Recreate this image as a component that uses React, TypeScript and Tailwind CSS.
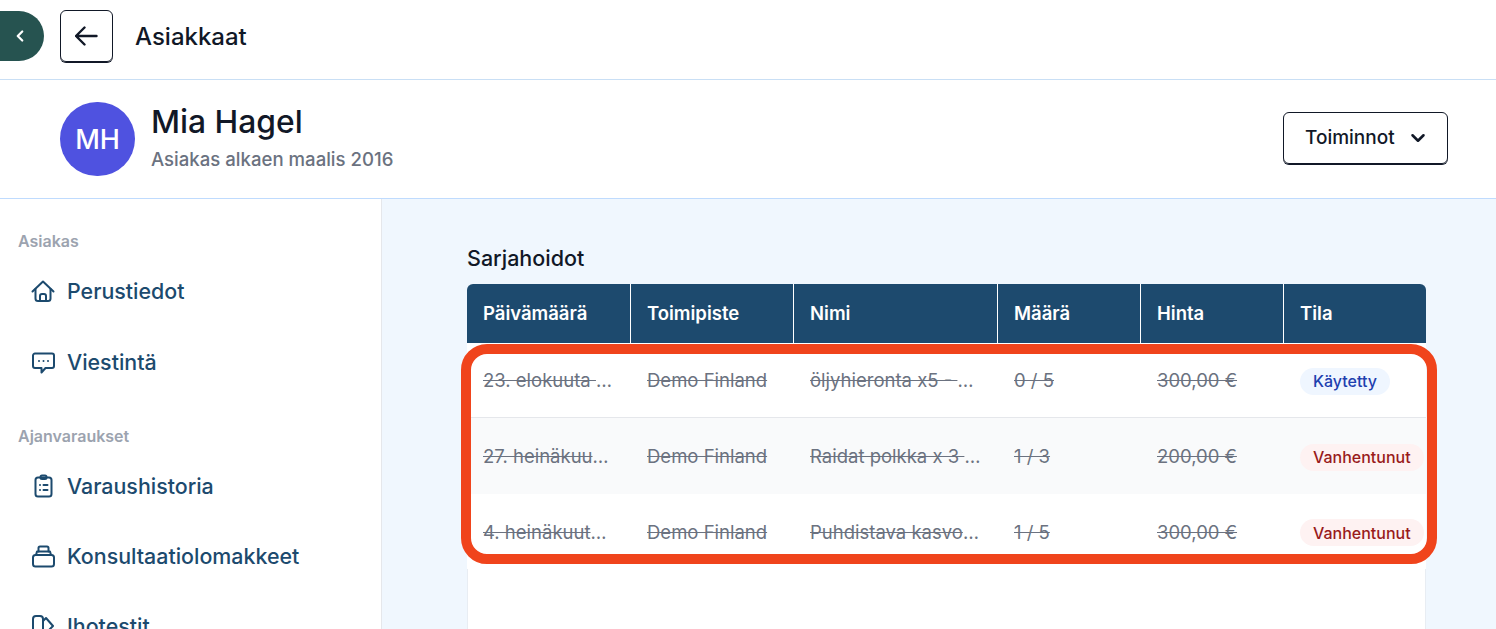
import { ChevronDown, ChevronLeft } from 'lucide-react';
import type { ReactNode } from 'react';

const rows = [
  { date: '23. elokuuta 2023', place: 'Demo Finland', name: 'öljyhieronta x5 - Rentouttava hoito', qty: '0 / 5', price: '300,00 €', status: 'Käytetty', h: 'h-[75px]', bg: 'bg-white border-b border-gray-200' },
  { date: '27. heinäkuuta 2023', place: 'Demo Finland', name: 'Raidat polkka x 3 hoitokerran sarja', qty: '1 / 3', price: '200,00 €', status: 'Vanhentunut', h: 'h-[76px]', bg: 'bg-[#f9fafb]' },
  { date: '4. heinäkuuta 2023', place: 'Demo Finland', name: 'Puhdistava kasvohoito x 5', qty: '1 / 5', price: '300,00 €', status: 'Vanhentunut', h: 'h-[75px]', bg: 'bg-white' },
];

const headers = ['Päivämäärä', 'Toimipiste', 'Nimi', 'Määrä', 'Hinta', 'Tila'];
const gridCols = 'grid grid-cols-[164px_163px_204px_143px_143px_142px]';

function Icon({ children }: { children: ReactNode }) {
  return (
    <svg className="w-[24px] h-[24px] shrink-0" viewBox="0 0 24 24" fill="none" stroke="currentColor" strokeWidth="2" strokeLinecap="round" strokeLinejoin="round">
      {children}
    </svg>
  );
}

function NavItem({ icon, label }: { icon: ReactNode; label: string }) {
  return (
    <div className="flex items-center h-[70px] pl-[31px] gap-[12px] text-[#1c4a6e]">
      {icon}
      <span className="text-[21.4px] font-medium leading-none pt-[2px]">{label}</span>
    </div>
  );
}

export default function App() {
  return (
    <div className="h-[629px] overflow-hidden bg-white text-[#111827] font-['Inter',sans-serif]">
      {/* Top bar */}
      <div className="h-[80px] border-b border-[#c9dff5] flex items-center pb-[6px]">
        <div className="w-[44px] h-[50px] mb-[2px] bg-[#265350] rounded-r-full flex items-center justify-center pr-[4px]">
          <ChevronLeft className="w-[18px] h-[18px] text-white" strokeWidth={3} />
        </div>
        <button className="ml-[16px] w-[53px] h-[52px] mb-[2px] border border-[#111827] rounded-md shadow-[0_1px_0_#111827] flex items-center justify-center">
          <svg className="w-[24px] h-[24px]" viewBox="0 0 24 24" fill="none" stroke="currentColor" strokeWidth="2.4" strokeLinecap="round" strokeLinejoin="round">
            <path d="M21.5 12H1M9.500 3.500L1 12l8.500 8.500" />
          </svg>
        </button>
        <h1 className="ml-[22px] text-[24px] font-medium">Asiakkaat</h1>
      </div>

      {/* Customer header */}
      <div className="h-[119px] border-b border-[#bfdbfe] flex items-center pl-[60px] pr-[48px]">
        <div className="w-[75px] h-[74px] rounded-full bg-[#4f52e0] text-white text-[27px] font-medium flex items-center justify-center pt-[2px]">MH</div>
        <div className="ml-[16px] -mt-[3px]">
          <div className="text-[31.8px] font-medium leading-[40px]">Mia Hagel</div>
          <div className="mt-[3px] text-[18.6px] font-medium text-[#6b7280] leading-[28px]">Asiakas alkaen maalis 2016</div>
        </div>
        <button className="ml-auto w-[165px] h-[52px] mb-[2px] border border-[#111827] rounded-md shadow-[0_1px_0_#111827] flex items-center pl-[21px] gap-[12px] text-[19px] font-medium">
          Toiminnot
          <ChevronDown className="w-[22px] h-[22px]" strokeWidth={2.8} />
        </button>
      </div>

      <div className="flex h-[430px]">
        {/* Sidebar */}
        <aside className="w-[382px] shrink-0 border-r border-[#e5e7eb] bg-white pt-[32px]">
          <div className="pl-[18px] text-[16px] font-semibold text-[#9ca3af] leading-[20px]">Asiakas</div>
          <div className="mt-[5px] flex flex-col gap-[1px]">
            <NavItem label="Perustiedot" icon={<Icon><path d="M1.500 12.500L12 2.500l10.500 10" /><path d="M4.500 10v9.500a2.500 2.500 0 0 0 2.500 2.500h10a2.500 2.500 0 0 0 2.500-2.500V10" /><path d="M9 22v-5a2 2 0 0 1 2-2h2a2 2 0 0 1 2 2v5" /></Icon>} />
            <NavItem label="Viestintä" icon={<Icon><path d="M4 3.500h17a2 2 0 0 1 2 2V16a2 2 0 0 1-2 2h-6.500L10.500 22.500V18H4a2 2 0 0 1-2-2V5.500a2 2 0 0 1 2-2z" /><path d="M8 11h.01M12.500 11h.01M17 11h.01" /></Icon>} />
          </div>
          <div className="mt-[29px] pl-[18px] text-[16px] font-semibold text-[#9ca3af] leading-[20px]">Ajanvaraukset</div>
          <div className="mt-[5px]">
            <NavItem label="Varaushistoria" icon={<Icon><rect x="4.500" y="3.500" width="16" height="19" rx="2.500" /><rect x="9.500" y="1.500" width="6" height="3.500" rx="1.500" /><path d="M9 11h.01M12.500 11h4M9 16h.01M12.500 16h4" /></Icon>} />
            <NavItem label="Konsultaatiolomakkeet" icon={<Icon><rect x="2" y="11" width="21" height="11.500" rx="2.500" /><path d="M5 11l1-3.500h13l1 3.500" /><path d="M7.500 7.500V4a1.500 1.500 0 0 1 1.500-1.500h7A1.500 1.500 0 0 1 17.500 4v3.500" /></Icon>} />
            <NavItem label="Ihotestit" icon={<Icon><path d="M2 22V5a3 3 0 0 1 3-3h4a3 3 0 0 1 3 3v17" /><path d="M12 7l3-3 7 8-6 6" /></Icon>} />
          </div>
        </aside>

        {/* Main */}
        <main className="flex-1 bg-[#f0f7fe] pl-[85px] pt-[46px] relative">
          <h2 className="text-[21.5px] font-medium leading-[26px] mb-[13px]">Sarjahoidot</h2>
          <div className="w-[959px] h-[400px] bg-white border-x border-[#e8edf3] rounded-t-md">
            <div className={`${gridCols} -mx-px h-[59px] bg-[#1d4a6e] text-white rounded-t-md`}>
              {headers.map((h, i) => (
                <div key={h} className={`flex items-center pl-[16px] text-[18.5px] font-semibold ${i < 5 ? 'border-r border-white' : ''}`}>
                  {h}
                </div>
              ))}
            </div>
            {rows.map((r) => (
              <div key={r.date} className={`${gridCols} -mx-px ${r.h} ${r.bg} items-center text-[18.5px] text-[#6b7280]`}>
                <div className="pl-[16px] pr-[18px] pt-[2px] truncate line-through">{r.date}</div>
                <div className="pl-[16px] pr-[16px] pt-[2px] truncate line-through">{r.place}</div>
                <div className="pl-[16px] pr-[16px] pt-[2px] truncate line-through">{r.name}</div>
                <div className="pl-[16px] pt-[2px] line-through">{r.qty}</div>
                <div className="pl-[16px] pt-[2px] line-through">{r.price}</div>
                <div className="pl-[16px] mt-[2px]">
                  <span className={`inline-flex h-[27px] items-center rounded-full px-[13px] text-[16px] font-medium whitespace-nowrap ${r.status === 'Käytetty' ? 'bg-[#eff6ff] text-[#1e40af]' : 'bg-[#fef2f2] text-[#991b1b]'}`}>
                    {r.status}
                  </span>
                </div>
              </div>
            ))}
          </div>
          {/* Highlight drawn over the screenshot */}
          <div className="absolute left-[79px] top-[145px] w-[976px] h-[220px] border-[10px] border-[#f0441c] rounded-[26px] pointer-events-none" />
        </main>
      </div>
    </div>
  );
}
